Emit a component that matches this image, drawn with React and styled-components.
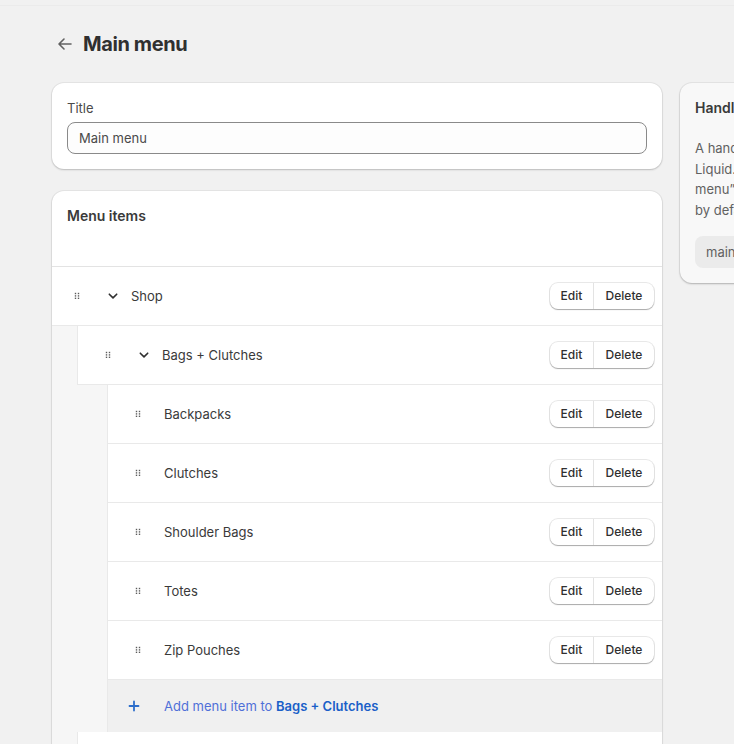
import React from "react";
import styled, { createGlobalStyle } from "styled-components";

const GlobalStyle = createGlobalStyle`
  html, body {
    margin: 0;
    padding: 0;
    height: 744px;
    overflow: hidden;
    background: #f1f1f1;
    font-family: Inter, "Liberation Sans", sans-serif;
    color: #303030;
  }
`;

const Page = styled.div`
  width: 734px;
  height: 744px;
  overflow: hidden;
`;

const TopLine = styled.div`
  height: 5px;
  border-bottom: 1px solid #ebebeb;
`;

const Content = styled.div`
  padding: 0 0 0 52px;
`;

const Header = styled.div`
  display: flex;
  align-items: center;
  height: 77px;
  padding: 0 0 1px 5px;
  box-sizing: border-box;
  gap: 10px;
`;

const BackButton = styled.span`
  display: flex;
  width: 16px;
  height: 16px;
  color: #616161;
`;

const PageTitle = styled.h1`
  margin: 0;
  font-size: 20px;
  line-height: 24px;
  font-weight: 700;
  letter-spacing: -0.4px;
  color: #303030;
`;

const Columns = styled.div`
  display: flex;
  align-items: flex-start;
  gap: 18px;
`;

const MainColumn = styled.div`
  display: flex;
  flex-direction: column;
  gap: 22px;
  width: 610px;
  flex-shrink: 0;
`;

const Card = styled.section`
  background: #fff;
  border-radius: 12px;
  box-shadow: 0 1px 2px rgba(26, 26, 26, 0.2), 0 0 0 1px rgba(26, 26, 26, 0.05);
`;

const TitleCard = styled(Card)`
  height: 86px;
  padding: 16px 15px 0;
  box-sizing: border-box;
`;

const Label = styled.label`
  display: block;
  font-size: 13px;
  line-height: 19px;
  color: #4a4a4a;
  margin-bottom: 4px;
`;

const TitleInput = styled.div`
  height: 32px;
  box-sizing: border-box;
  border: 1px solid #8a8a8a;
  border-radius: 8px;
  background: #fdfdfd;
  padding: 0 11px;
  font-size: 13px;
  line-height: 30px;
  color: #4a4a4a;
`;

const ItemsCard = styled(Card)`
  border-radius: 12px 12px 0 0;
  overflow: hidden;
`;

const ItemsHeading = styled.h2`
  margin: 0;
  height: 76px;
  box-sizing: border-box;
  padding: 16px 15px 0;
  font-size: 14px;
  line-height: 18px;
  font-weight: 600;
  color: #3a3a3a;
  border-bottom: 1px solid #e3e3e3;
`;

const Indent = styled.div`
  background: #f6f6f6;
  padding-left: ${(p) => p.$left}px;
`;

const Row = styled.div`
  display: flex;
  align-items: center;
  height: 59px;
  box-sizing: border-box;
  background: #fff;
  border-bottom: 1px solid #e9e9e9;
  border-left: ${(p) => (p.$flush ? "0" : "1px solid #e9e9e9")};
  padding-right: 8px;
`;

const Grip = styled.svg`
  width: 6px;
  height: 8px;
  margin-left: ${(p) => p.$left}px;
  color: #5c5c5c;
  flex-shrink: 0;
`;

const Toggle = styled.svg`
  width: 14px;
  height: 14px;
  margin-left: 26px;
  margin-right: 11px;
  color: #303030;
  flex-shrink: 0;
`;

const ItemName = styled.span`
  flex: 1;
  font-size: 13px;
  line-height: 18px;
  color: #3a3a3a;
  margin-left: ${(p) => p.$left || 0}px;
`;

const ButtonGroup = styled.div`
  display: flex;
  height: 26px;
  box-sizing: border-box;
  border-radius: 8px;
  background: #fff;
  box-shadow: 0 1px 1px rgba(26, 26, 26, 0.3), 0 0 0 1px rgba(26, 26, 26, 0.1);
`;

const GroupButton = styled.button`
  border: 0;
  background: transparent;
  padding: 0 0 2px;
  width: ${(p) => p.$width}px;
  font: 450 12px Inter, "Liberation Sans", sans-serif;
  color: #303030;
  & + & {
    border-left: 1px solid #e3e3e3;
  }
`;

const AddRow = styled.div`
  display: flex;
  align-items: center;
  height: 52px;
  background: #f0f0f0;
  border-left: 1px solid #e9e9e9;
`;

const PlusIcon = styled.svg`
  width: 12px;
  height: 12px;
  margin-left: 20px;
  margin-right: 24px;
  color: #2c6ecb;
`;

const AddLabel = styled.span`
  font-size: 13px;
  line-height: 18px;
  color: #4f6fd8;
  b {
    font-weight: 600;
    color: #1a5fc8;
  }
`;

const SideCard = styled.aside`
  width: 300px;
  height: 200px;
  box-sizing: border-box;
  flex-shrink: 0;
  padding: 16px 15px;
  background: #f8f8f8;
  border-radius: 12px;
  box-shadow: 0 1px 2px rgba(26, 26, 26, 0.25), 0 0 0 1px rgba(26, 26, 26, 0.05);
`;

const SideTitle = styled.h2`
  margin: 0 0 21px;
  font-size: 14px;
  line-height: 18px;
  font-weight: 600;
  white-space: nowrap;
  color: #3a3a3a;
`;

const SideText = styled.p`
  margin: 0 0 15px;
  font-size: 13px;
  line-height: 20.7px;
  white-space: nowrap;
  color: #616161;
`;

const HandleField = styled.div`
  height: 32px;
  box-sizing: border-box;
  border-radius: 8px;
  background: #ebebeb;
  padding: 0 11px;
  font-size: 13px;
  line-height: 32px;
  color: #616161;
`;

const GripIcon = ({ left }) => (
  <Grip $left={left} viewBox="0 0 6 8" fill="currentColor">
    {[0.8, 3.8].map((x) =>
      [0.8, 3.2, 5.6].map((y) => (
        <rect key={`${x}-${y}`} x={x} y={y} width="1.4" height="1.4" />
      ))
    )}
  </Grip>
);

const ChevronIcon = () => (
  <Toggle viewBox="0 0 14 14" fill="none" stroke="currentColor" strokeWidth="1.6">
    <path d="M3.3 5.2 7 8.9l3.7-3.7" strokeLinecap="round" strokeLinejoin="round" />
  </Toggle>
);

const MenuRow = ({ name, open, flush, nameLeft, gripLeft = 27 }) => (
  <Row $flush={flush}>
    <GripIcon left={gripLeft} />
    {open && <ChevronIcon />}
    <ItemName $left={nameLeft}>{name}</ItemName>
    <ButtonGroup>
      <GroupButton $width={43}>Edit</GroupButton>
      <GroupButton $width={61}>Delete</GroupButton>
    </ButtonGroup>
  </Row>
);

const children = ["Backpacks", "Clutches", "Shoulder Bags", "Totes", "Zip Pouches"];

export default function App() {
  return (
    <Page>
      <GlobalStyle />
      <TopLine />
      <Content>
        <Header>
          <BackButton>
            <svg viewBox="0 0 16 16" width="16" height="16" fill="none" stroke="currentColor" strokeWidth="1.6" strokeLinecap="round" strokeLinejoin="round">
              <path d="M14 8H2.5M7 3 2 8l5 5" />
            </svg>
          </BackButton>
          <PageTitle>Main menu</PageTitle>
        </Header>
        <Columns>
          <MainColumn>
            <TitleCard>
              <Label>Title</Label>
              <TitleInput>Main menu</TitleInput>
            </TitleCard>
            <ItemsCard>
              <ItemsHeading>Menu items</ItemsHeading>
              <MenuRow name="Shop" open flush gripLeft={22} />
              <Indent $left={25}>
                <MenuRow name="Bags + Clutches" open />
                <Indent $left={30}>
                  {children.map((name) => (
                    <MenuRow key={name} name={name} nameLeft={23} />
                  ))}
                  <AddRow>
                    <PlusIcon viewBox="0 0 12 12" fill="none" stroke="currentColor" strokeWidth="1.8" strokeLinecap="round">
                      <path d="M6 1.5v9M1.5 6h9" />
                    </PlusIcon>
                    <AddLabel>
                      Add menu item to <b>Bags + Clutches</b>
                    </AddLabel>
                  </AddRow>
                </Indent>
                <Row />
              </Indent>
            </ItemsCard>
          </MainColumn>
          <SideCard>
            <SideTitle>Handle</SideTitle>
            <SideText>
              A handle is used to reference a menu in
              <br />
              Liquid. e.g. a menu with the title
              <br />
              menu” would have the handle main-menu
              <br />
              by default.
            </SideText>
            <HandleField>main-menu</HandleField>
          </SideCard>
        </Columns>
      </Content>
    </Page>
  );
}
